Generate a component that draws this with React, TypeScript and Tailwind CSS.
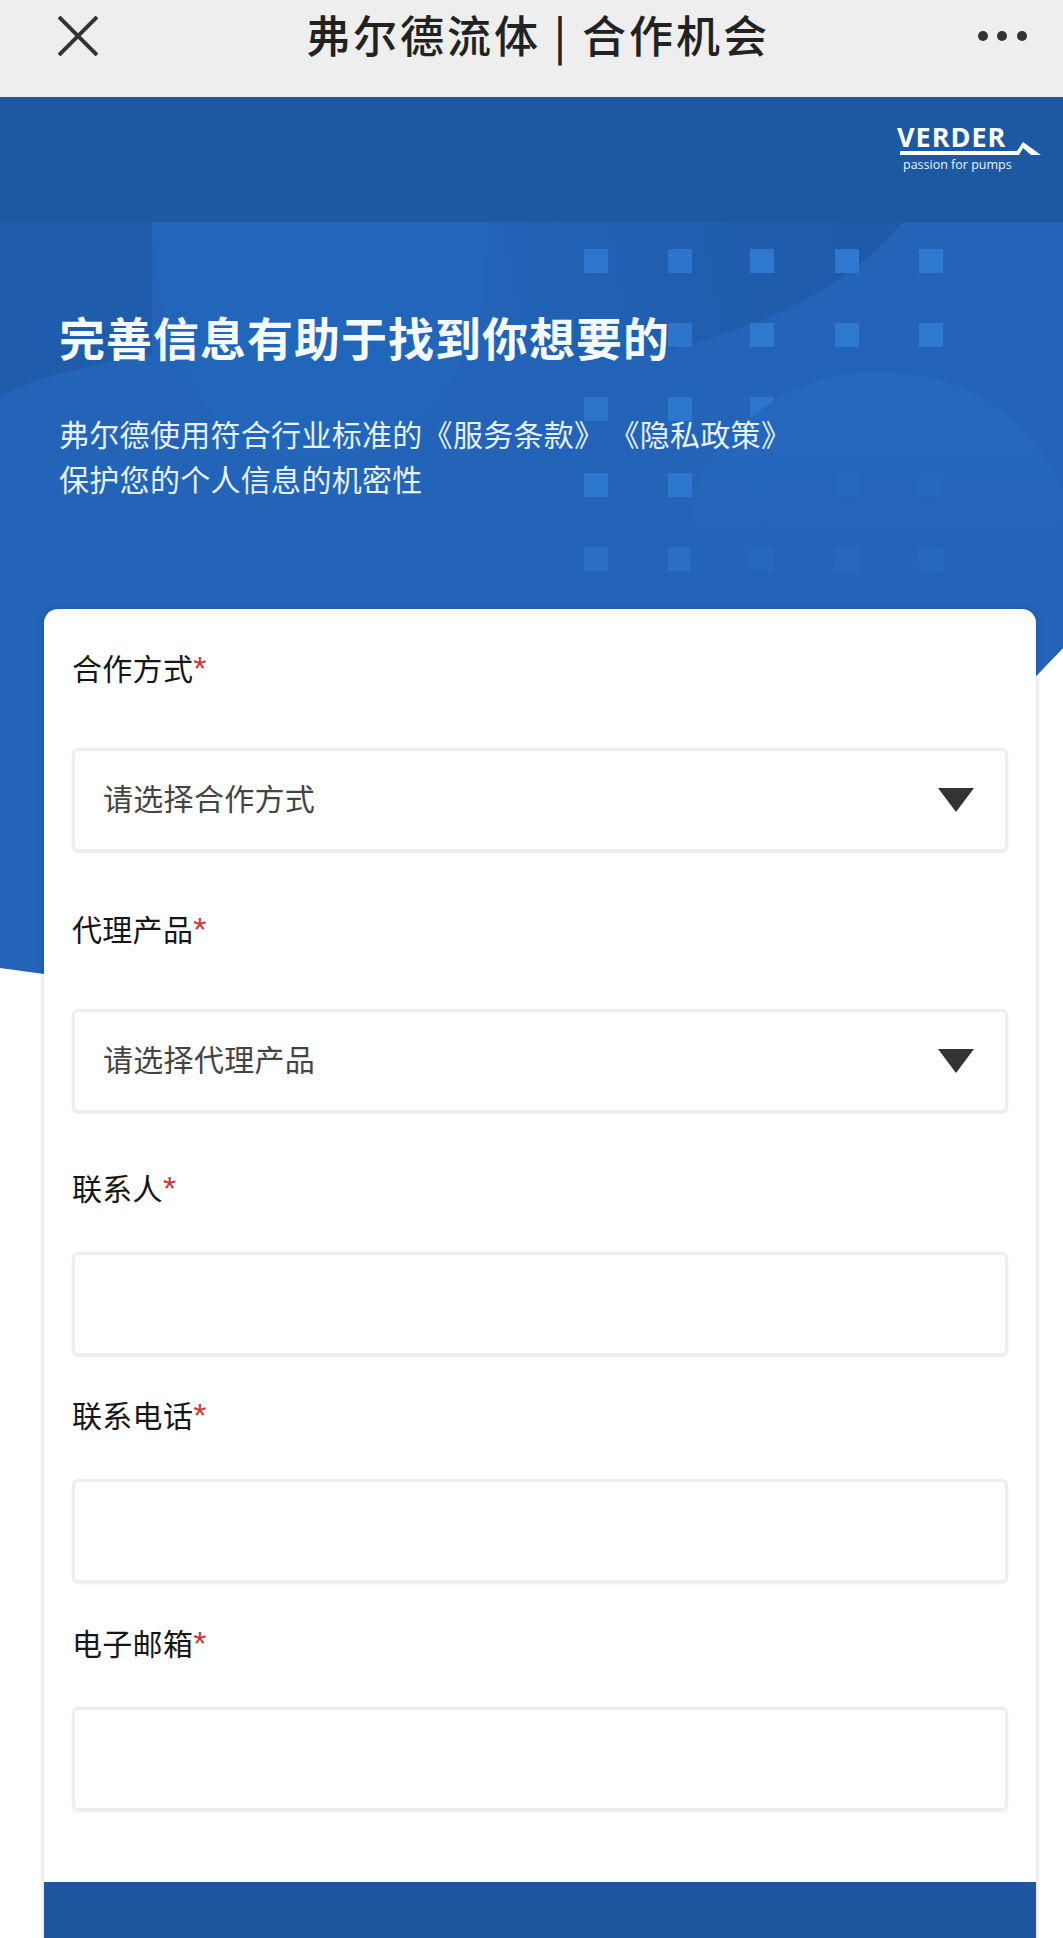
const cjk = "font-['Noto_Sans_CJK_SC','Noto_Sans',sans-serif]";

const squareRows = [
  { y: 249, opacity: [0.9, 0.9, 1, 1, 1] },
  { y: 323, opacity: [0.9, 0.9, 1, 1, 1] },
  { y: 397, opacity: [0.8, 0.9, 0.9, 0, 0] },
  { y: 473, opacity: [0.9, 0.9, 0.05, 0.15, 0.15] },
  { y: 547, opacity: [0.6, 0.55, 0.2, 0.25, 0.25] },
];
const squareXs = [584, 668, 750, 835, 919];

function HeroBackground() {
  return (
    <svg className="absolute left-0 top-0" width="1063" height="1000" viewBox="0 0 1063 1000">
      <defs>
        <linearGradient id="darkCorner" gradientUnits="userSpaceOnUse" x1="480" y1="300" x2="880" y2="230">
          <stop offset="0" stopColor="#2263b7" />
          <stop offset="1" stopColor="#1e5aa7" />
        </linearGradient>
        <linearGradient id="blob" gradientUnits="userSpaceOnUse" x1="850" y1="372" x2="850" y2="600">
          <stop offset="0" stopColor="#2569bf" />
          <stop offset="0.6" stopColor="#2465bb" />
          <stop offset="1" stopColor="#2364b9" />
        </linearGradient>
      </defs>
      <path d="M0 222H1063V648L1036 676L600 900L44 974L0 968Z" fill="#2364b9" />
      <path d="M0 222H152V355C90 365 40 375 0 397Z" fill="#1f5cab" />
      <path d="M480 222H903C880 250 850 275 810 297C770 320 730 332 700 342C640 360 560 370 470 345Z" fill="url(#darkCorner)" />
      <path d="M152 222H488C490 300 470 380 410 430C370 460 320 468 270 452C200 430 155 340 152 222Z" fill="#2266bc" />
      {squareRows.map((row) =>
        squareXs.map((x, i) => (
          <rect key={`${row.y}-${x}`} x={x} y={row.y} width="24" height="24" fill="#2f78cf" opacity={row.opacity[i]} />
        ))
      )}
      <path d="M760 410C795 385 835 372 876 372C950 372 1020 400 1063 490V648L1036 676H690V520C690 480 720 440 760 410Z" fill="url(#blob)" />
      {squareRows.slice(3).map((row) =>
        squareXs.slice(2).map((x, i) => (
          <rect key={`top-${row.y}-${x}`} x={x} y={row.y} width="24" height="24" fill="#2f78cf" opacity={row.opacity[i + 2]} />
        ))
      )}
    </svg>
  );
}

function VerderLogo() {
  return (
    <div className="w-[146px] flex flex-col">
      <div className="pl-[2px] h-[24px] leading-[24px] text-[27px] font-bold text-white tracking-[1px] font-['Open_Sans',sans-serif]">
        VERDER
      </div>
      <svg width="146" height="14" viewBox="0 0 146 14" className="block mt-[-7px]">
        <path d="M5 9H122L128 0L146 13H136L128 6L124 13H5Z" fill="#ffffff" />
      </svg>
      <div className="pl-[8px] h-[18px] leading-[18px] text-[12.5px] text-[#e8f2fb] font-['Open_Sans',sans-serif]">
        passion for pumps
      </div>
    </div>
  );
}

function Label({ text, className = "" }: { text: string; className?: string }) {
  return (
    <div className={`h-[45px] leading-[45px] text-[30px] tracking-[0.3px] text-[#161616] ${cjk} ${className}`}>
      {text}
      <span className="text-[#c8383c] text-[34px] font-['Liberation_Sans',sans-serif]">*</span>
    </div>
  );
}

function SelectField({ label, placeholder, className }: { label: string; placeholder: string; className: string }) {
  return (
    <div className={className}>
      <Label text={label} />
      <div className="mt-[58px] h-[104px] flex items-center justify-between pl-[28px] pr-[31px] bg-white border-[3px] border-[#eeeeee] rounded-[6px] shadow-[0_1px_2px_rgba(0,0,0,0.08)]">
        <span className={`mb-[5px] text-[30px] tracking-[0.3px] text-[#444444] ${cjk}`}>{placeholder}</span>
        <svg width="36" height="24" viewBox="0 0 36 24" className="block">
          <path d="M0 0H36L18 24Z" fill="#333333" />
        </svg>
      </div>
    </div>
  );
}

function TextField({ label, className }: { label: string; className: string }) {
  return (
    <div className={className}>
      <Label text={label} />
      <input className="mt-[42px] block w-full h-[104px] bg-white border-[3px] border-[#eeeeee] rounded-[6px] outline-none shadow-[0_1px_2px_rgba(0,0,0,0.08)]" />
    </div>
  );
}

export default function App() {
  return (
    <div className={`relative w-full h-[1938px] overflow-hidden bg-white ${cjk}`}>
      <HeroBackground />

      {/* Top bar */}
      <div className="relative h-[97px] bg-[#eeeeee] flex items-start pl-[58px] pr-[36px]">
        <svg width="40" height="40" viewBox="0 0 40 40" className="mt-[16px] shrink-0">
          <path d="M1 1L39 39M39 1L1 39" stroke="#333333" strokeWidth="4" fill="none" />
        </svg>
        <div className="flex-1 text-center h-[68px] leading-[68px] text-[44px] tracking-[3px] font-medium text-[#222222]">
          弗尔德流体 | 合作机会
        </div>
        <svg width="49" height="12" viewBox="0 0 49 12" className="mt-[30px] shrink-0">
          <circle cx="5" cy="6" r="5" fill="#333333" />
          <circle cx="24" cy="6" r="5" fill="#333333" />
          <circle cx="44" cy="6" r="5" fill="#333333" />
        </svg>
      </div>

      {/* Logo band */}
      <div className="relative h-[125px] bg-[#1d58a2] flex justify-end pt-[28px] pr-[22px]">
        <VerderLogo />
      </div>

      {/* Hero copy */}
      <div className="relative pl-[59px] pt-[84px]">
        <h1 className="h-[60px] leading-[60px] text-[46px] tracking-[1px] font-bold text-[#f4faff]">完善信息有助于找到你想要的</h1>
        <p className="mt-[45px] text-[30px] leading-[45px] tracking-[0.3px] text-[#e6f1fb]">
          弗尔德使用符合行业标准的《服务条款》<span className="inline-block w-[5px]" />《隐私政策》
          <br />
          保护您的个人信息的机密性
        </p>
      </div>

      {/* Form card */}
      <div className="relative ml-[44px] mr-[27px] mt-[108px] bg-white rounded-t-[14px] shadow-[0_0_6px_rgba(0,0,0,0.18)]">
        <div className="px-[28px] pt-[36px] pb-[71px]">
          <SelectField label="合作方式" placeholder="请选择合作方式" className="" />
          <SelectField label="代理产品" placeholder="请选择代理产品" className="mt-[54px]" />
          <TextField label="联系人" className="mt-[52px]" />
          <TextField label="联系电话" className="mt-[36px]" />
          <TextField label="电子邮箱" className="mt-[37px]" />
        </div>
        <button className="block w-full h-[144px] bg-[#1d569e] text-[36px] text-[#e6f1fb]">提交信息</button>
      </div>
    </div>
  );
}
